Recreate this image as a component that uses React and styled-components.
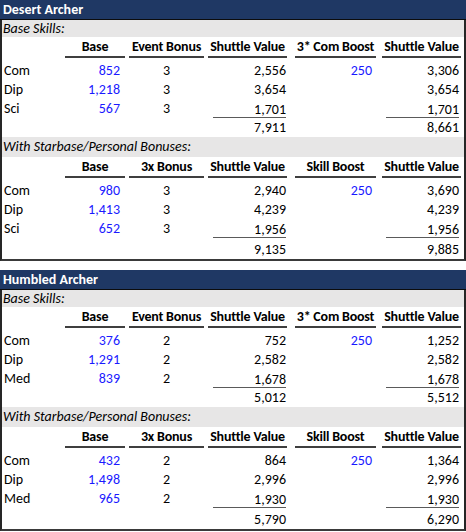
import React from "react";
import styled, { createGlobalStyle } from "styled-components";

const GlobalStyle = createGlobalStyle`
  body {
    margin: 0;
    background: #ffffff;
    font-family: Carlito, Lato, "Open Sans", sans-serif;
    font-size: 14px;
    color: #000000;
  }
`;

// column geometry: left margin and width of each cell
const COLS = [
  { ml: 0, w: 61 },
  { ml: 2, w: 60 },
  { ml: 4, w: 75 },
  { ml: 4, w: 79 },
  { ml: 8, w: 81 },
  { ml: 6, w: 79 },
];

const Page = styled.div`
  width: 466px;
  display: flex;
  flex-direction: column;
  gap: 9px;
`;

const Panel = styled.section`
  width: 466px;
  box-sizing: border-box;
  border-left: 2px solid #262626;
  border-right: 2px solid #262626;
  border-bottom: 2px solid #3a3a3a;
`;

const Title = styled.div`
  margin: 0 -2px;
  height: 19px;
  background: #1f3864;
  border-bottom: 1px solid #0c0c0c;
  color: #ffffff;
  font-weight: 700;
  line-height: 19px;
  padding-left: 3px;
`;

const Band = styled.div`
  height: ${(p) => p.$h}px;
  line-height: ${(p) => p.$h}px;
  background: #e7e6e6;
  font-style: italic;
  padding-left: 1px;
`;

const Row = styled.div`
  display: flex;
  align-items: flex-end;
  height: ${(p) => p.$h || 19}px;
  line-height: 19px;
  margin-bottom: ${(p) => p.$mb || 0}px;
`;

const Cell = styled.div`
  box-sizing: border-box;
  flex: none;
  margin-left: ${(p) => COLS[p.$c].ml}px;
  width: ${(p) => COLS[p.$c].w}px;
  text-align: ${(p) => p.$align || "right"};
  padding-right: ${(p) => p.$pr || 0}px;
  padding-left: ${(p) => (p.$c === 0 ? 2 : 0)}px;
  color: ${(p) => (p.$input ? "#1a1aff" : "#000000")};
  white-space: nowrap;
`;

const HeadCell = styled(Cell)`
  font-weight: 700;
  text-align: center;
  border-bottom: ${(p) => (p.$c === 0 ? "none" : "2px solid #3f3f3f")};
  height: 21px;
  line-height: 19px;
  letter-spacing: -0.2px;
`;

const SumLine = styled.span`
  display: block;
  margin-left: ${(p) => p.$inset}px;
  border-bottom: 1.5px solid #5a5a5a;
  height: 17.5px;
`;

const sections = [
  {
    title: "Desert Archer",
    labels: ["Com", "Dip", "Sci"],
    parts: [
      {
        band: "Base Skills:",
        bandH: 17,
        totalH: 19,
        heads: ["Base", "Event Bonus", "Shuttle Value", "3* Com Boost", "Shuttle Value"],
        rows: [
          ["852", "3", "2,556", "250", "3,306"],
          ["1,218", "3", "3,654", "", "3,654"],
          ["567", "3", "1,701", "", "1,701"],
        ],
        totals: ["7,911", "8,661"],
      },
      {
        band: "With Starbase/Personal Bonuses:",
        bandH: 20,
        totalH: 21,
        heads: ["Base", "3x Bonus", "Shuttle Value", "Skill Boost", "Shuttle Value"],
        rows: [
          ["980", "3", "2,940", "250", "3,690"],
          ["1,413", "3", "4,239", "", "4,239"],
          ["652", "3", "1,956", "", "1,956"],
        ],
        totals: ["9,135", "9,885"],
      },
    ],
  },
  {
    title: "Humbled Archer",
    labels: ["Com", "Dip", "Med"],
    parts: [
      {
        band: "Base Skills:",
        bandH: 17,
        totalH: 19,
        heads: ["Base", "Event Bonus", "Shuttle Value", "3* Com Boost", "Shuttle Value"],
        rows: [
          ["376", "2", "752", "250", "1,252"],
          ["1,291", "2", "2,582", "", "2,582"],
          ["839", "2", "1,678", "", "1,678"],
        ],
        totals: ["5,012", "5,512"],
      },
      {
        band: "With Starbase/Personal Bonuses:",
        bandH: 20,
        totalH: 21,
        heads: ["Base", "3x Bonus", "Shuttle Value", "Skill Boost", "Shuttle Value"],
        rows: [
          ["432", "2", "864", "250", "1,364"],
          ["1,498", "2", "2,996", "", "2,996"],
          ["965", "2", "1,930", "", "1,930"],
        ],
        totals: ["5,790", "6,290"],
      },
    ],
  },
];

const Part = ({ part, labels }) => {
  const last = part.rows.length - 1;
  return (
    <>
      <Band $h={part.bandH}>{part.band}</Band>
      <Row $h={21} $mb={3}>
        <HeadCell $c={0} />
        {part.heads.map((h, i) => (
          <HeadCell key={i} $c={i + 1}>
            {h}
          </HeadCell>
        ))}
      </Row>
      {part.rows.map((r, ri) => (
        <Row key={ri}>
          <Cell $c={0} $align="left">
            {labels[ri]}
          </Cell>
          <Cell $c={1} $input $pr={5}>
            {r[0]}
          </Cell>
          <Cell $c={2} $align="center">
            {r[1]}
          </Cell>
          <Cell $c={3} $pr={1}>
            {ri === last ? <SumLine $inset={5}>{r[2]}</SumLine> : r[2]}
          </Cell>
          <Cell $c={4} $input $pr={4}>
            {r[3]}
          </Cell>
          <Cell $c={5} $pr={2}>
            {ri === last ? <SumLine $inset={4}>{r[4]}</SumLine> : r[4]}
          </Cell>
        </Row>
      ))}
      <Row $h={part.totalH}>
        <Cell $c={0} />
        <Cell $c={1} />
        <Cell $c={2} />
        <Cell $c={3} $pr={1}>
          {part.totals[0]}
        </Cell>
        <Cell $c={4} />
        <Cell $c={5} $pr={2}>
          {part.totals[1]}
        </Cell>
      </Row>
    </>
  );
};

const App = () => (
  <Page>
    <GlobalStyle />
    {sections.map((s) => (
      <Panel key={s.title}>
        <Title>{s.title}</Title>
        {s.parts.map((p, i) => (
          <Part key={i} part={p} labels={s.labels} />
        ))}
      </Panel>
    ))}
  </Page>
);

export default App;
